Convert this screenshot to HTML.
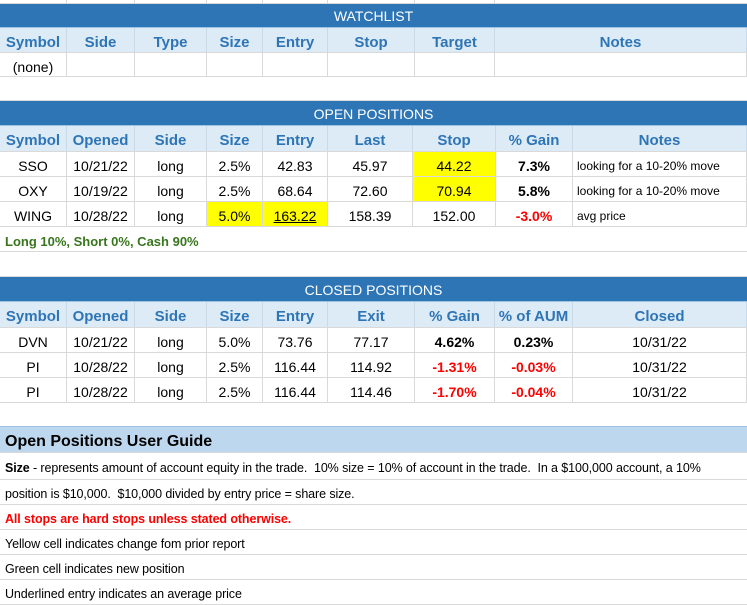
<!DOCTYPE html>
<html><head><style>
*{margin:0;padding:0;box-sizing:border-box}
body{width:747px;height:602px;background:#fff;font-family:"Liberation Sans",Arial,sans-serif;font-size:14px;color:#000;position:relative;overflow:hidden}
.r{position:absolute;left:0;width:747px;display:flex;border-bottom:1px solid #d9d9d9}
.r>div{border-right:1px solid #d9d9d9;display:flex;align-items:center;justify-content:center;white-space:nowrap;overflow:hidden;padding-top:4px}
.bar{background:#2e75b6;color:#fff;justify-content:center;font-size:14px;border-bottom:1px solid #9dc3e6}
.bar>div{border:none;width:747px;padding-top:1px!important}
.h{background:#ddebf7}
.h>div{color:#2e75b6;font-weight:bold;font-size:15px;border-right-color:#c9d9e8}
.y{background:#ffff00}
.b{font-weight:bold}
.red{color:#f00;font-weight:bold}
.n{justify-content:flex-start!important;padding-left:4px;font-size:12px}
.g>div{justify-content:flex-start;padding-left:5px;font-size:12.5px;letter-spacing:-0.1px}
</style></head><body>
<div class="r" style="top:0;height:4px"><div style="width:67px"></div><div style="width:68px"></div><div style="width:72px"></div><div style="width:56px"></div><div style="width:65px"></div><div style="width:87px"></div><div style="width:80px"></div><div style="width:252px;border:none"></div></div>
<div class="r bar" style="top:4px;height:24px"><div>WATCHLIST</div></div>
<div class="r h" style="top:28px;height:25px"><div style="width:67px">Symbol</div><div style="width:68px">Side</div><div style="width:72px">Type</div><div style="width:56px">Size</div><div style="width:65px">Entry</div><div style="width:87px">Stop</div><div style="width:80px">Target</div><div style="width:252px">Notes</div></div>
<div class="r" style="top:53px;height:24px"><div style="width:67px">(none)</div><div style="width:68px"></div><div style="width:72px"></div><div style="width:56px"></div><div style="width:65px"></div><div style="width:87px"></div><div style="width:80px"></div><div style="width:252px"></div></div>
<div class="r" style="top:77px;height:24px"></div>
<div class="r bar" style="top:101px;height:25px"><div>OPEN POSITIONS</div></div>
<div class="r h" style="top:126px;height:26px"><div style="width:67px">Symbol</div><div style="width:68px">Opened</div><div style="width:72px">Side</div><div style="width:56px">Size</div><div style="width:65px">Entry</div><div style="width:85px">Last</div><div style="width:83px">Stop</div><div style="width:77px">% Gain</div><div style="width:174px">Notes</div></div>
<div class="r" style="top:152px;height:25px"><div style="width:67px">SSO</div><div style="width:68px">10/21/22</div><div style="width:72px">long</div><div style="width:56px">2.5%</div><div style="width:65px">42.83</div><div style="width:85px">45.97</div><div style="width:83px" class="y">44.22</div><div style="width:77px" class="b">7.3%</div><div style="width:174px" class="n">looking for a 10-20% move</div></div>
<div class="r" style="top:177px;height:25px"><div style="width:67px">OXY</div><div style="width:68px">10/19/22</div><div style="width:72px">long</div><div style="width:56px">2.5%</div><div style="width:65px">68.64</div><div style="width:85px">72.60</div><div style="width:83px" class="y">70.94</div><div style="width:77px" class="b">5.8%</div><div style="width:174px" class="n">looking for a 10-20% move</div></div>
<div class="r" style="top:202px;height:25px"><div style="width:67px">WING</div><div style="width:68px">10/28/22</div><div style="width:72px">long</div><div style="width:56px" class="y">5.0%</div><div style="width:65px;text-decoration:underline" class="y">163.22</div><div style="width:85px">158.39</div><div style="width:83px">152.00</div><div style="width:77px" class="red">-3.0%</div><div style="width:174px" class="n">avg price</div></div>
<div class="r" style="top:227px;height:25px"><div style="width:747px;justify-content:flex-start;padding-left:5px;color:#38761d;font-weight:bold;font-size:13px;border:none">Long 10%, Short 0%, Cash 90%</div></div>
<div class="r" style="top:252px;height:25px"></div>
<div class="r bar" style="top:277px;height:25px"><div>CLOSED POSITIONS</div></div>
<div class="r h" style="top:302px;height:26px"><div style="width:67px">Symbol</div><div style="width:68px">Opened</div><div style="width:72px">Side</div><div style="width:56px">Size</div><div style="width:65px">Entry</div><div style="width:87px">Exit</div><div style="width:80px">% Gain</div><div style="width:78px">% of AUM</div><div style="width:174px">Closed</div></div>
<div class="r" style="top:328px;height:25px"><div style="width:67px">DVN</div><div style="width:68px">10/21/22</div><div style="width:72px">long</div><div style="width:56px">5.0%</div><div style="width:65px">73.76</div><div style="width:87px">77.17</div><div style="width:80px" class="b">4.62%</div><div style="width:78px" class="b">0.23%</div><div style="width:174px">10/31/22</div></div>
<div class="r" style="top:353px;height:25px"><div style="width:67px">PI</div><div style="width:68px">10/28/22</div><div style="width:72px">long</div><div style="width:56px">2.5%</div><div style="width:65px">116.44</div><div style="width:87px">114.92</div><div style="width:80px" class="red">-1.31%</div><div style="width:78px" class="red">-0.03%</div><div style="width:174px">10/31/22</div></div>
<div class="r" style="top:378px;height:25px"><div style="width:67px">PI</div><div style="width:68px">10/28/22</div><div style="width:72px">long</div><div style="width:56px">2.5%</div><div style="width:65px">116.44</div><div style="width:87px">114.46</div><div style="width:80px" class="red">-1.70%</div><div style="width:78px" class="red">-0.04%</div><div style="width:174px">10/31/22</div></div>
<div class="r" style="top:403px;height:24px;border-bottom:1px solid #9dc3e6"></div>
<div class="r" style="top:427px;height:26px;background:#bdd7ee"><div style="width:747px;justify-content:flex-start;padding-left:5px;font-weight:bold;font-size:16px;border:none">Open Positions User Guide</div></div>
<div class="r g" style="top:453px;height:27px"><div style="width:747px;border:none"><b>Size</b>&nbsp;- represents amount of account equity in the trade.&nbsp; 10% size = 10% of account in the trade.&nbsp; In a $100,000 account, a 10%</div></div>
<div class="r g" style="top:480px;height:25px"><div style="width:747px;border:none">position is $10,000.&nbsp; $10,000 divided by entry price = share size.</div></div>
<div class="r g" style="top:505px;height:25px"><div style="width:747px;border:none;color:#f00;font-weight:bold">All stops are hard stops unless stated otherwise.</div></div>
<div class="r g" style="top:530px;height:25px"><div style="width:747px;border:none">Yellow cell indicates change fom prior report</div></div>
<div class="r g" style="top:555px;height:25px"><div style="width:747px;border:none">Green cell indicates new position</div></div>
<div class="r g" style="top:580px;height:25px"><div style="width:747px;border:none">Underlined entry indicates an average price</div></div>
</body></html>
